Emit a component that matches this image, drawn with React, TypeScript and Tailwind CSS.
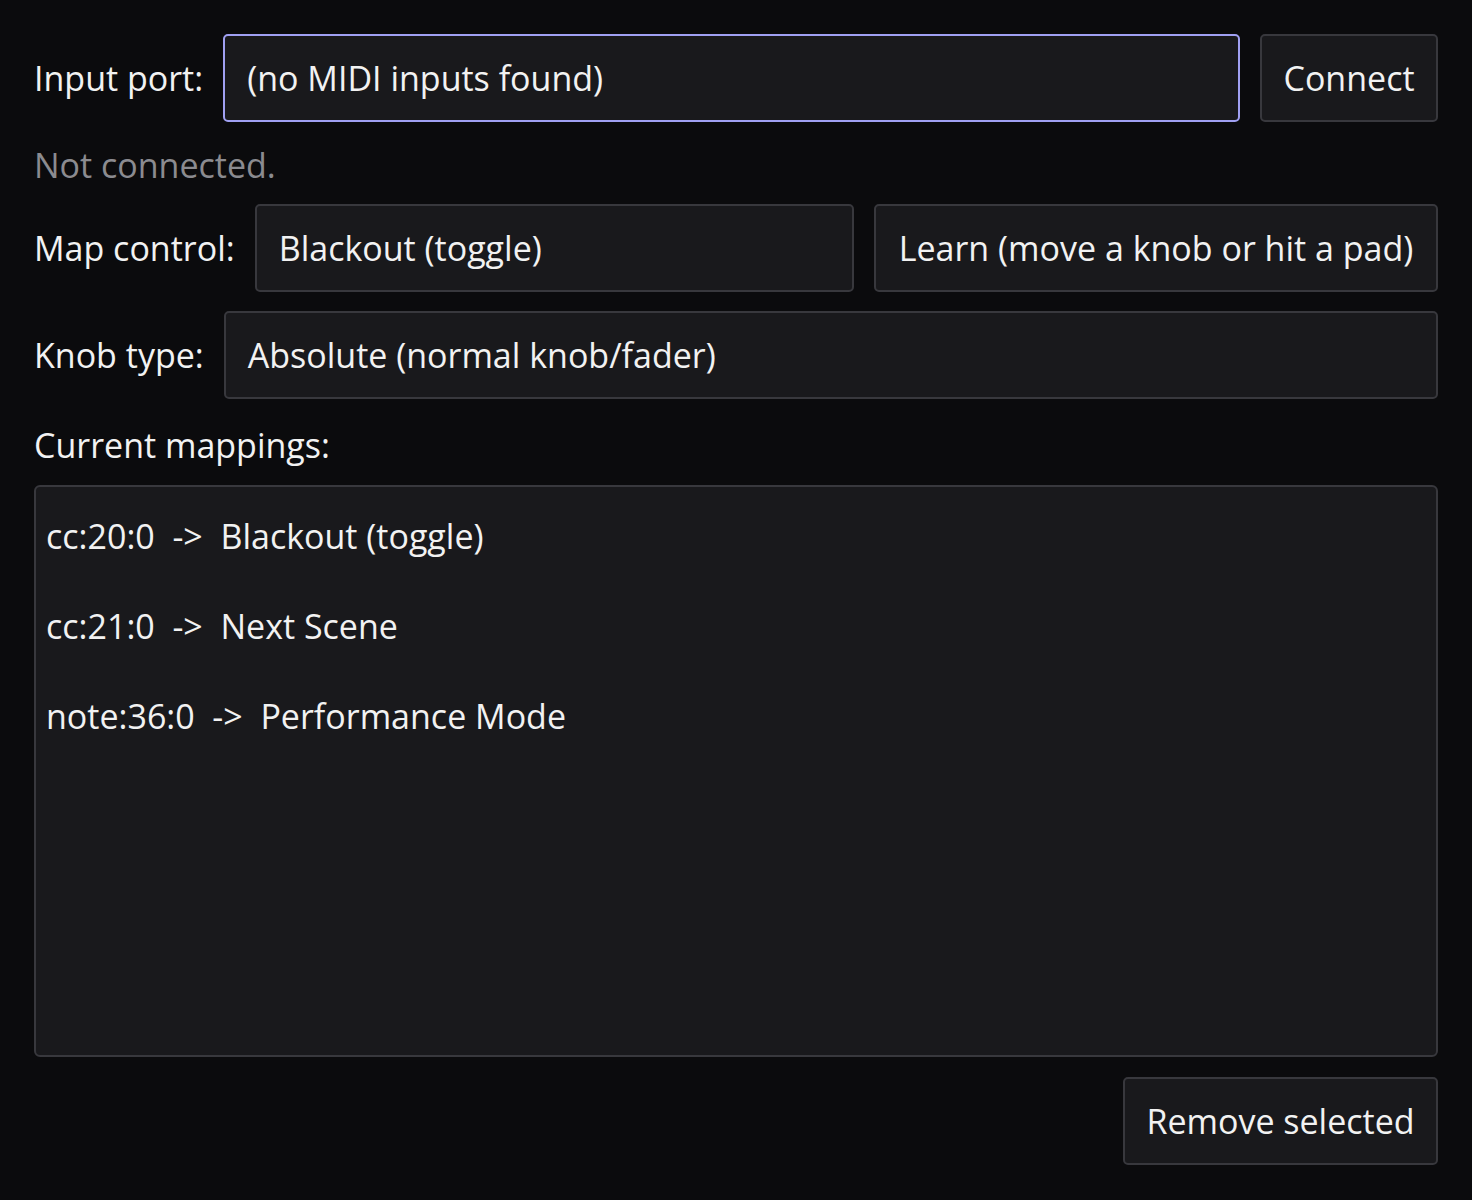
import { useState } from "react";

type Mapping = { key: string; action: string };

const MAPPINGS: Mapping[] = [
  { key: "cc:20:0", action: "Blackout (toggle)" },
  { key: "cc:21:0", action: "Next Scene" },
  { key: "note:36:0", action: "Performance Mode" },
];

const field =
  "flex h-[88px] items-center rounded-[5px] border-2 bg-[#19191c] px-[22px] text-[#f2f2f2]";

function Combo({ value, focused, className = "" }: { value: string; focused?: boolean; className?: string }) {
  return (
    <div className={`${field} min-w-0 ${focused ? "border-[#a0a0f2]" : "border-[#38383d]"} ${className}`}>
      <span className="whitespace-nowrap">{value}</span>
    </div>
  );
}

function Button({ children, className = "" }: { children: string; className?: string }) {
  return (
    <button className={`${field} shrink-0 justify-center whitespace-nowrap border-[#38383d] ${className}`}>
      {children}
    </button>
  );
}

export default function App() {
  const [selected] = useState<number | null>(null);

  return (
    <div
      className="min-h-[1200px] w-[1472px] bg-[#0b0b0d] px-[34px] pt-[34px] text-[34px] leading-[40px] text-[#f2f2f2]"
      style={{ fontFamily: '"Open Sans", "Noto Sans", sans-serif' }}
    >
      {/* port picker */}
      <div className="flex items-center gap-[20px]">
        <span className="whitespace-nowrap">Input port:</span>
        <Combo value="(no MIDI inputs found)" focused className="flex-1" />
        <Button className="w-[178px]">Connect</Button>
      </div>
      <p className="mt-[23px] text-[#8b8b90]">Not connected.</p>

      {/* learn row */}
      <div className="mt-[19px] flex items-center gap-[20px]">
        <span className="whitespace-nowrap">Map control:</span>
        <Combo value="Blackout (toggle)" className="flex-1" />
        <Button className="w-[564px]">Learn (move a knob or hit a pad)</Button>
      </div>

      <div className="mt-[19px] flex items-center gap-[20px]">
        <span className="whitespace-nowrap">Knob type:</span>
        <Combo value="Absolute (normal knob/fader)" className="flex-1" />
      </div>

      <p className="mt-[26px]">Current mappings:</p>

      {/* mapping list */}
      <ul className="mt-[20px] h-[572px] rounded-[6px] border-2 border-[#38383d] bg-[#19191c] px-[10px] pt-[4px]">
        {MAPPINGS.map((m, i) => (
          <li
            key={m.key}
            className={`flex h-[90px] items-center whitespace-pre ${selected === i ? "bg-[#2d2d6a]" : ""}`}
          >
            {`${m.key}  ->  ${m.action}`}
          </li>
        ))}
      </ul>

      <div className="mt-[20px] flex justify-end">
        <Button className="w-[315px]">Remove selected</Button>
      </div>
    </div>
  );
}
